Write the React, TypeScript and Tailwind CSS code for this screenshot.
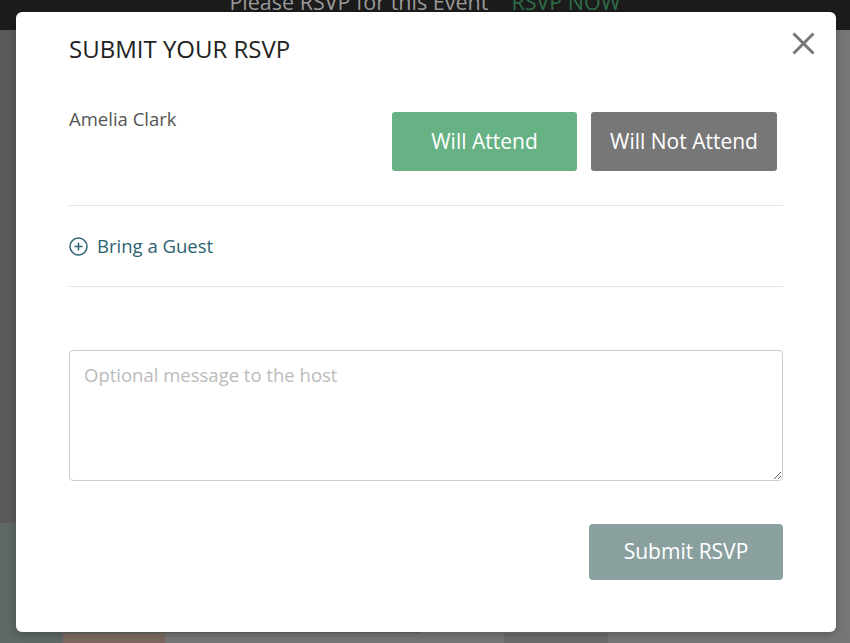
import React, { useState } from "react";

function CloseIcon() {
  return (
    <svg width="23" height="23" viewBox="0 0 23 23" fill="none">
      <path d="M1.5 1.5L21.5 21.5M21.5 1.5L1.5 21.5" stroke="#777777" strokeWidth="3" />
    </svg>
  );
}

function PlusCircle() {
  return (
    <svg width="19" height="19" viewBox="0 0 19 19" fill="none">
      <circle cx="9.5" cy="9.5" r="8.5" stroke="#2c6370" strokeWidth="1.5" />
      <path d="M9.5 5.5v8M5.5 9.5h8" stroke="#2c6370" strokeWidth="1.5" />
    </svg>
  );
}

export default function App() {
  const [attending, setAttending] = useState<boolean | null>(null);
  const [message, setMessage] = useState("");

  return (
    <div
      className="relative h-[643px] w-full overflow-hidden bg-[#767676]"
      style={{ fontFamily: '"Open Sans", "Liberation Sans", sans-serif' }}
    >
      {/* page behind the overlay */}
      <div className="flex h-[30px] justify-center gap-[23px] overflow-hidden bg-[#1c1c1c] text-[21.5px] leading-none">
        <span className="-mt-[9px] text-[#9a9a9a]">Please RSVP for this Event</span>
        <span className="-mt-[9px] text-[#2f6d46]">RSVP NOW</span>
      </div>
      <div className="flex h-[493px]">
        <div className="w-[420px] bg-[#5b5b5b]" />
      </div>
      <div className="flex h-[110px]">
        <div className="w-[420px] bg-[#5e6864]" />
      </div>
      <div className="flex h-[10px]">
        <div className="w-[63px] bg-[#5e6864]" />
        <div className="w-[102px] bg-[#7b675f]" />
        <div className="w-[339px]" />
        <div className="w-[104px] bg-[#6b6b6b]" />
      </div>

      {/* modal */}
      <div className="absolute left-[16px] top-[12px] w-[820px] rounded-[6px] bg-white px-[53px] pb-[52px] pt-[21px] shadow-[0_2px_8px_rgba(0,0,0,0.25)]">
        <button className="absolute right-[21px] top-[20px]">
          <CloseIcon />
        </button>

        <h2 className="text-[24px] leading-[32px] text-[#222]">SUBMIT YOUR RSVP</h2>

        <div className="mt-[47px] flex items-start justify-between">
          <div className="text-[18.5px] leading-[14px] text-[#555]">Amelia Clark</div>
          <div className="mr-[6px] flex gap-[14px]">
            <button
              onClick={() => setAttending(true)}
              className="h-[59px] w-[185px] rounded-[3px] bg-[#67b285] text-[21px] text-white"
            >
              Will Attend
            </button>
            <button
              onClick={() => setAttending(false)}
              className="h-[59px] w-[186px] rounded-[3px] bg-[#777777] text-[21px] text-white"
            >
              Will Not Attend
            </button>
          </div>
        </div>

        <div className="mt-[34px] border-t border-[#e3e3e3]" />

        <div className="flex items-center gap-[9px] py-[28px]">
          <PlusCircle />
          <span className="text-[18.5px] leading-[24px] text-[#2c6370]">Bring a Guest</span>
        </div>

        <div className="border-t border-[#e3e3e3]" />

        <textarea
          value={message}
          onChange={(e) => setMessage(e.target.value)}
          placeholder="Optional message to the host"
          className="mt-[63px] block h-[131px] w-full rounded-[4px] border border-[#cccccc] px-[14px] pt-[12px] text-[18.5px] leading-[24px] text-[#333] outline-none placeholder:text-[#bbbbbb]"
        />

        <div className="mt-[43px] flex justify-end">
          <button className="h-[56px] w-[194px] rounded-[4px] bg-[#8aa09f] text-[21px] text-white">
            Submit RSVP
          </button>
        </div>
        <span className="hidden">{String(attending)}</span>
      </div>
    </div>
  );
}
